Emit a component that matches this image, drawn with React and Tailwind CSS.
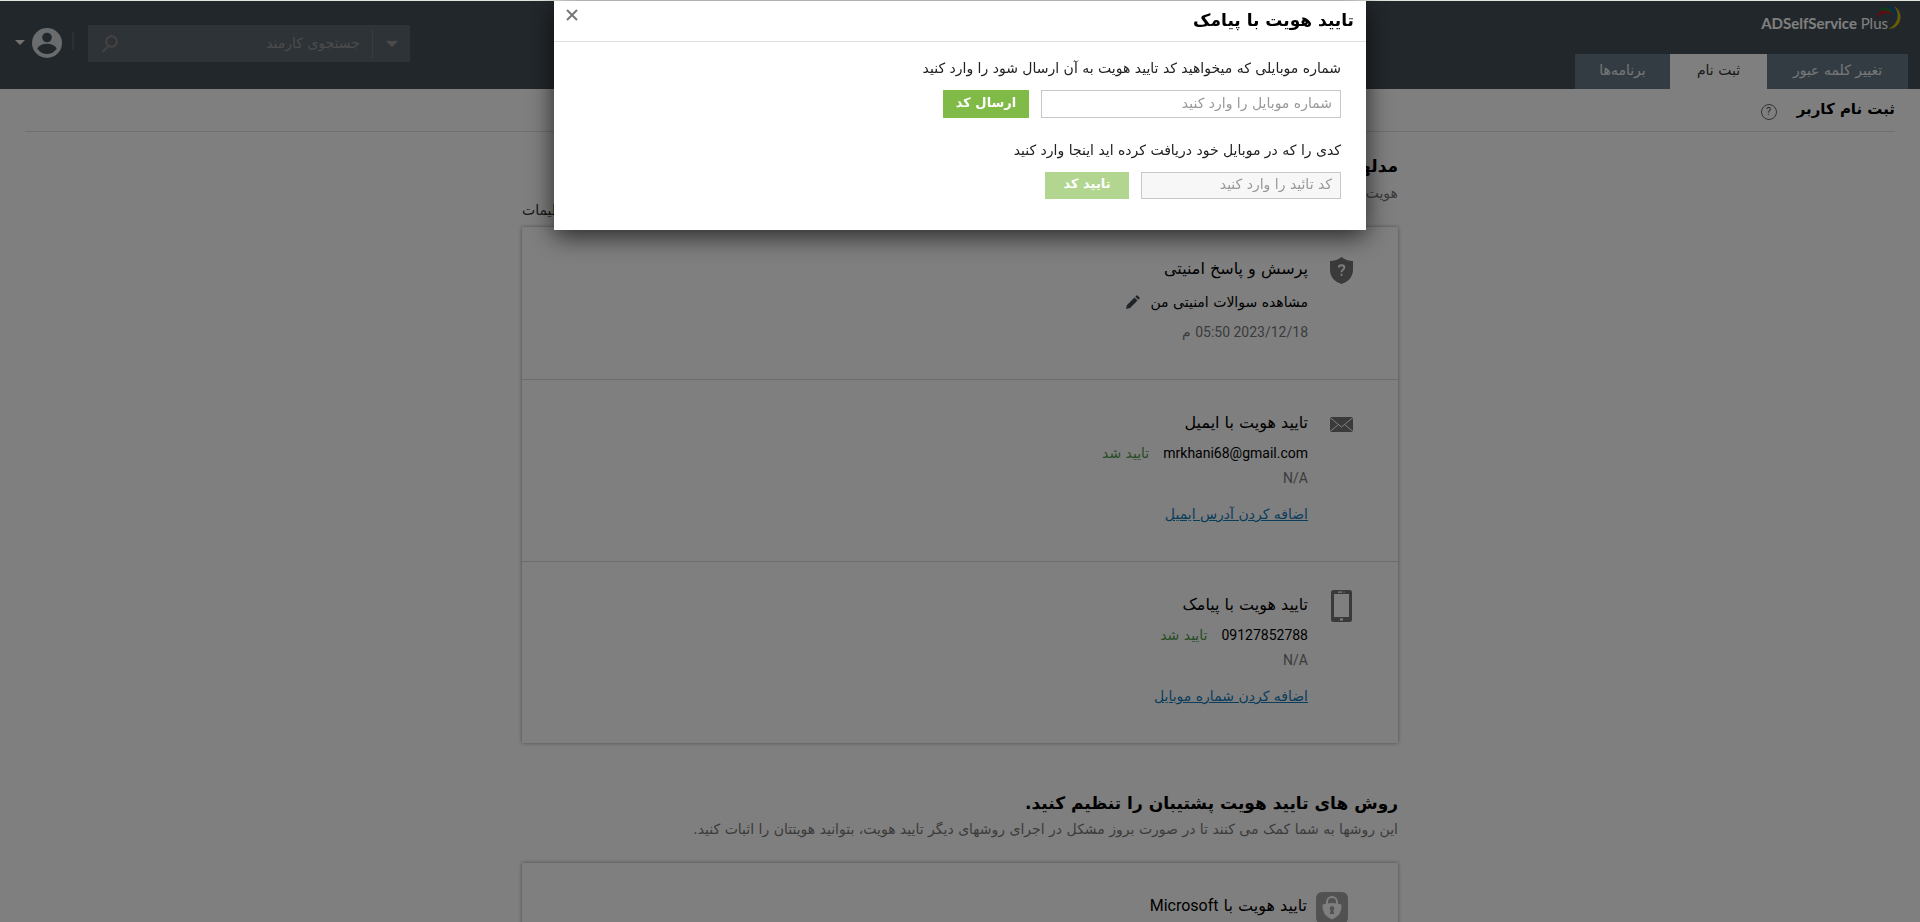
const TABS = [
  { label: "تغییر کلمه عبور", className: "w-[141px] bg-[#647884] text-[#eee]" },
  { label: "ثبت نام", className: "w-[97px] bg-white text-[#333]" },
  { label: "برنامه‌ها", className: "w-[95px] bg-[#647884] text-[#eee]" },
];

function LogoArcs() {
  return (
    <svg width="26" height="25" viewBox="0 0 26 25" className="absolute -right-3.5 -top-2" aria-hidden="true">
      <path d="M1 12C3 4.500 12 3.500 17 9C12 7 5 7.500 1 12Z" fill="#c01822" stroke="#c01822" />
      <path d="M4 5C9 1 16.500 3 18.500 9.500C14.500 5.500 9 4.500 4 5Z" fill="#1f7a35" stroke="#1f7a35" />
      <path d="M11 1.500C18 1 23.500 8 20.500 16C20 9 16 4 11 1.500Z" fill="#1c5496" stroke="#1c5496" />
      <path d="M19 2C28 8 25 23 13.500 23.500C21 20 25 10 19 2Z" fill="#d8b800" stroke="#d8b800" strokeWidth=".5" />
    </svg>
  );
}

function Caret({ className }) {
  return (
    <svg viewBox="0 0 12 6" className={className} fill="currentColor" aria-hidden="true">
      <path d="M0 0H12L6 6Z" />
    </svg>
  );
}

function ShieldIcon() {
  return (
    <svg width="23" height="27" viewBox="0 0 23 27" aria-hidden="true">
      <path d="M11.500 0C8.500 2.500 4 4 0 4V13C0 20 5 25 11.500 27C18 25 23 20 23 13V4C19 4 14.500 2.500 11.500 0Z" fill="#747474" />
      <path d="M8.800 10.500C9 7.500 14.300 7.500 14.300 10.500C14.300 12.600 11.500 12.600 11.500 15.200M11.500 16.800V18.800" fill="none" stroke="#fff" strokeWidth="1.800" />
    </svg>
  );
}

function MailIcon() {
  return (
    <svg width="23" height="15" viewBox="0 0 23 15" aria-hidden="true">
      <rect width="23" height="15" rx="1" fill="#747474" />
      <path d="M0 .5L11.500 10L23 .5M0 14.500L8.500 7.500M23 14.500L14.500 7.500" fill="none" stroke="#fff" strokeWidth="1" />
    </svg>
  );
}

function PhoneIcon() {
  return (
    <svg width="21" height="32" viewBox="0 0 21 32" aria-hidden="true">
      <rect width="21" height="32" rx="2.500" fill="#747474" />
      <path d="M3 4H18V27H3Z" fill="#fff" />
      <path d="M7 1.500H11V2.800H7ZM12.500 1.500H13.500V2.800H12.500ZM9 28.500H12V30.500H9Z" fill="#fff" />
    </svg>
  );
}

function LockIcon() {
  return (
    <svg width="32" height="32" viewBox="0 0 32 32" aria-hidden="true">
      <rect width="32" height="32" rx="6" fill="#a4a4a4" />
      <path d="M11 12V10A5 5 0 0 1 21 10V12" fill="none" stroke="#fff" strokeWidth="2" />
      <path d="M6.500 12.500Q16 9.500 25.500 12.500Q26.500 23 16 27.500Q5.500 23 6.500 12.500Z" fill="#fff" />
      <path d="M16 14A2.500 2.500 0 0 1 17.300 18.500L18.300 22H13.700L14.700 18.500A2.500 2.500 0 0 1 16 14Z" fill="#a4a4a4" />
    </svg>
  );
}

function PencilIcon() {
  return (
    <svg width="14" height="14" viewBox="0 0 14 14" fill="#3d4850" aria-hidden="true">
      <path d="M0 14L1 10L8.500 2.500L11.500 5.500L4 13ZM9.300 1.700L10.500 .5Q11 0 11.600 .5L13.500 2.400Q14 3 13.500 3.500L12.300 4.700Z" />
    </svg>
  );
}

function Header() {
  return (
    <header className="flex h-22 justify-between bg-[#454f57] px-3">
      <div className="flex flex-col justify-between">
        <div className="pt-3 pr-5">
          <a href="#home" dir="ltr" className="relative block w-fit font-[Lato] text-[15px] leading-5 font-bold text-white">
            ADSelfService <span className="font-normal">Plus</span>
            <LogoArcs />
          </a>
        </div>
        <nav className="flex">
          {TABS.map((tab) => (
            <a key={tab.label} href="#tab" className={`flex h-[35px] items-center justify-center pb-0.5 ${tab.className}`}>
              {tab.label}
            </a>
          ))}
        </nav>
      </div>

      <div className="mt-6 flex h-[37px] items-center gap-3.5">
        <div className="flex h-full w-[322px] items-center bg-[#5a666c] text-[#999]">
          <button aria-label="گزینه‌های جستجو" className="flex h-7 w-[38px] items-center justify-center border-l border-[#6f7b80]">
            <Caret className="w-3" />
          </button>
          <input
            type="search"
            aria-label="جستجوی کارمند"
            placeholder="جستجوی کارمند"
            className="min-w-0 flex-1 bg-transparent px-3 outline-none placeholder:text-[#999]"
          />
          <button aria-label="جستجو" className="pl-3.5">
            <svg width="16" height="18" viewBox="0 0 16 18" fill="none" stroke="#8b8583" strokeWidth="2" aria-hidden="true">
              <circle cx="9.500" cy="6.500" r="5.300" />
              <path d="M6 11L.7 17" />
            </svg>
          </button>
        </div>
        <div className="mb-1.5 h-[18px] w-0.5 bg-[#56616a]" />
        <button aria-label="حساب کاربری" className="-mr-1 flex items-center gap-[7px] pb-0.5 pl-[3px] text-[#e6e6e6]">
          <svg width="30" height="30" viewBox="0 0 30 30" fill="#d3d7d9" aria-hidden="true">
            <circle cx="15" cy="15" r="15" />
            <circle cx="15" cy="9.500" r="4.800" fill="#454f57" />
            <path d="M5.200 20.500Q8 15.800 15 15.800T24.800 20.500Q21 26 15 26T5.200 20.500Z" fill="#454f57" />
          </svg>
          <Caret className="w-2.5" />
        </button>
      </div>
    </header>
  );
}

function MethodRow({ icon, title, children, className }) {
  return (
    <div className={`flex gap-[21px] border-[#ddd] pr-[45px] ${className}`}>
      <div className="flex h-8 w-6 shrink-0 items-center justify-center">{icon}</div>
      <div>
        <h3 className="text-[16px] leading-[30px]">{title}</h3>
        {children}
      </div>
    </div>
  );
}

function Contact({ value, link }) {
  return (
    <>
      <p className="flex gap-3.5 leading-[30px]">
        <bdi className="font-[Roboto]">{value}</bdi>
        <span className="text-[#4f9a4a]">تایید شد</span>
      </p>
      <p className="font-[Roboto] leading-5 text-[#777]">N/A</p>
      <a href="#add" className="mt-2.5 block w-fit leading-8 text-[#147ab8] underline">
        {link}
      </a>
    </>
  );
}

function EnrollmentPage() {
  return (
    <main>
      <div className="mr-[25px] ml-[25px] flex h-[43px] items-center gap-5 border-b border-[#e0e0e0] pb-0.5">
        <h1 className="text-[15px] font-bold">ثبت نام کاربر</h1>
        <button aria-label="راهنما" className="mt-1.5 size-4 rounded-full border border-[#666] font-[Roboto] text-[11px] leading-3 text-[#555]">
          ?
        </button>
      </div>

      <div className="mx-auto w-[876px] max-w-full">
        <section className="pt-[18px]">
          <h2 className="text-[17px] leading-8 font-bold">مدلهای تایید هویت</h2>
          <p className="leading-[22px] text-[#777]">هویت خود را تایید کنید</p>
          <div className="flex h-[23px] justify-end leading-3">
            <a href="#settings" className="text-[#333]">تنظیمات</a>
          </div>
          <div className="bg-white shadow-[0_0_4px_rgba(0,0,0,0.4)]">
            <MethodRow icon={<ShieldIcon />} title="پرسش و پاسخ امنیتی" className="h-[153px] border-b pt-[27px]">
              <p className="flex items-center gap-2.5 leading-9">
                <a href="#questions">مشاهده سوالات امنیتی من</a>
                <button aria-label="ویرایش">
                  <PencilIcon />
                </button>
              </p>
              <p className="leading-6 text-[#777]">
                <span className="font-[Roboto]">
                  <bdi>2023/12/18</bdi> <bdi>05:50</bdi>
                </span>{" "}
                م
              </p>
            </MethodRow>
            <MethodRow icon={<MailIcon />} title="تایید هویت با ایمیل" className="h-[182px] border-b pt-[28px]">
              <Contact value="mrkhani68@gmail.com" link="اضافه کردن آدرس ایمیل" />
            </MethodRow>
            <MethodRow icon={<PhoneIcon />} title="تایید هویت با پیامک" className="h-[181px] pt-[28px]">
              <Contact value="09127852788" link="اضافه کردن شماره موبایل" />
            </MethodRow>
          </div>
        </section>

        <section className="pt-11">
          <h2 className="text-[17px] leading-8 font-bold">روش های تایید هویت پشتیبان را تنظیم کنید.</h2>
          <p className="leading-5 text-[#777]">
            این روشها به شما کمک می کنند تا در صورت بروز مشکل در اجرای روشهای دیگر تایید هویت، بتوانید هویتتان را اثبات کنید.
          </p>
          <div className="mt-6 flex h-40 gap-[9px] bg-white pt-[29px] pr-[50px] shadow-[0_0_4px_rgba(0,0,0,0.4)]">
            <LockIcon />
            <h3 className="text-[16px] leading-7">
              تایید هویت با <bdi className="font-[Roboto]">Microsoft</bdi>
            </h3>
          </div>
        </section>
      </div>
    </main>
  );
}

function SmsDialog() {
  return (
    <div className="fixed inset-x-0 top-px bottom-0 flex items-start justify-center bg-black/50">
      <div
        role="dialog"
        aria-labelledby="sms-title"
        className="w-[812px] max-w-full bg-white pb-[31px] shadow-[0_6px_24px_rgba(0,0,0,0.7)]"
      >
        <div className="flex h-[41px] items-center justify-between border-b border-[#e0e0e0] px-3">
          <h2 id="sms-title" className="text-[17px] font-bold">تایید هویت با پیامک</h2>
          <button aria-label="بستن" className="pb-3">
            <svg width="12" height="12" viewBox="0 0 12 12" stroke="#777" strokeWidth="2" aria-hidden="true">
              <path d="M1 1L11 11M11 1L1 11" />
            </svg>
          </button>
        </div>
        <form className="px-[25px] pt-3.5" onSubmit={(e) => e.preventDefault()}>
          <label htmlFor="mobile" className="block h-[34px] leading-6 text-[#222]">
            شماره موبایلی که میخواهید کد تایید هویت به آن ارسال شود را وارد کنید
          </label>
          <div className="flex gap-3">
            <input
              id="mobile"
              placeholder="شماره موبایل را وارد کنید"
              className="h-7 w-[300px] border border-[#c8c8c8] px-2 pb-0.5 outline-none placeholder:text-[#999]"
            />
            <button className="h-7 w-[86px] bg-[#80bb48] pb-0.5 text-[13px] font-bold text-white">ارسال کد</button>
          </div>
          <label htmlFor="code" className="mt-5 block h-[34px] leading-6 text-[#222]">
            کدی را که در موبایل خود دریافت کرده اید اینجا وارد کنید
          </label>
          <div className="flex gap-3">
            <input
              id="code"
              disabled
              placeholder="کد تائید را وارد کنید"
              className="h-[27px] w-[200px] border border-[#c8c8c8] bg-[#f7f7f7] px-2 pb-1 outline-none placeholder:text-[#999]"
            />
            <button disabled className="h-[27px] w-[84px] bg-[#b2d690] pb-1 text-[13px] font-bold text-white">تایید کد</button>
          </div>
        </form>
      </div>
    </div>
  );
}

export default function App() {
  return (
    <div
      dir="rtl"
      lang="fa"
      className="h-screen overflow-hidden border-t border-[#dfe5df] bg-white font-['DejaVu_Sans',sans-serif] text-[14px] text-black"
    >
      <Header />
      <EnrollmentPage />
      <SmsDialog />
    </div>
  );
}
